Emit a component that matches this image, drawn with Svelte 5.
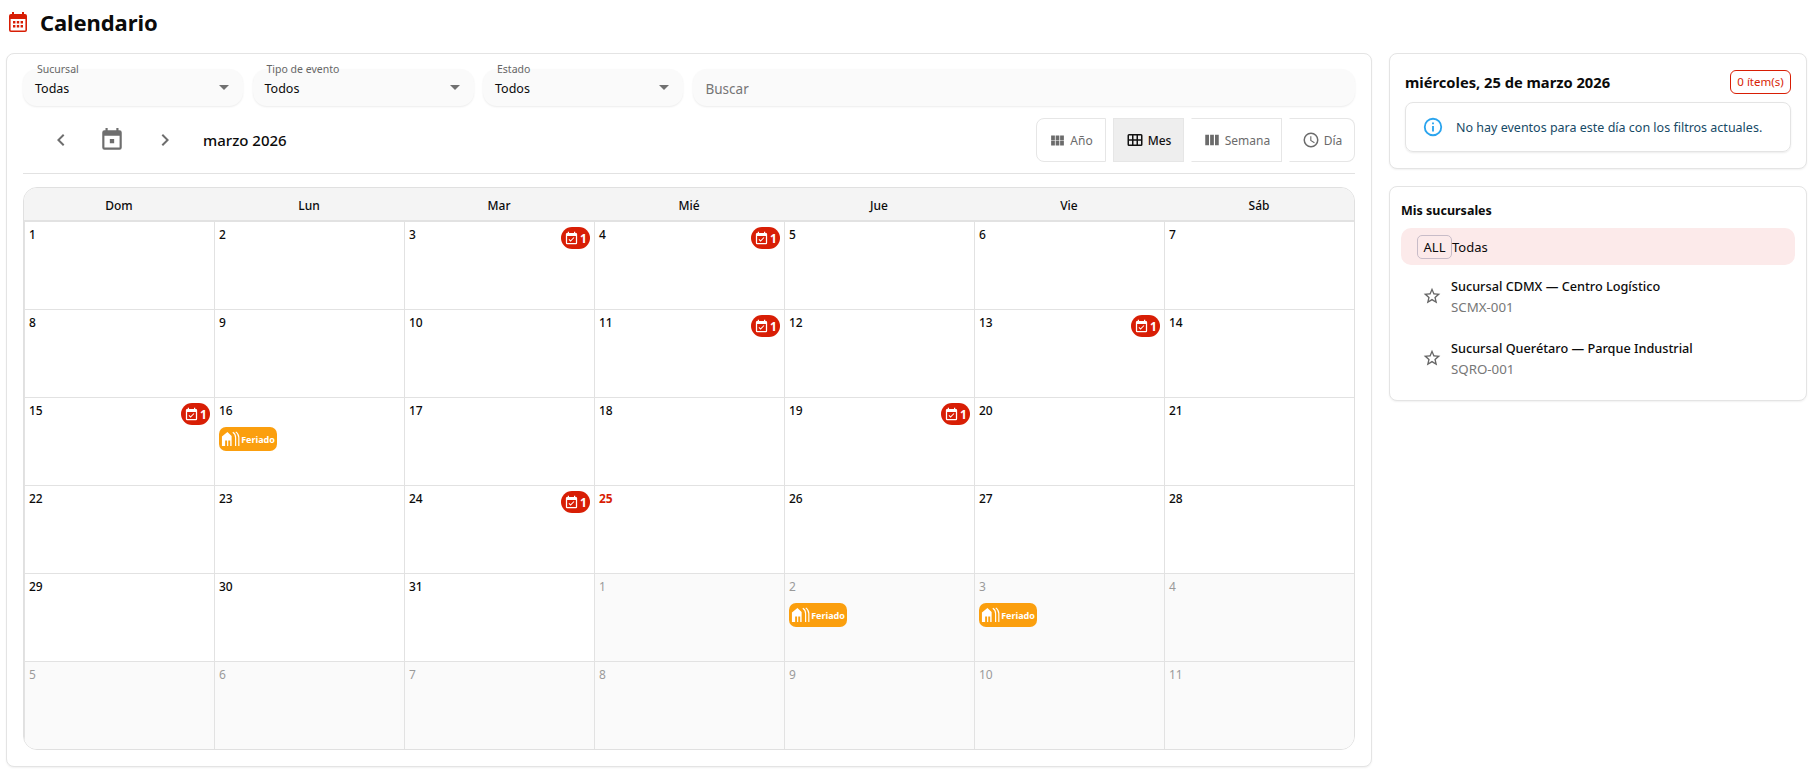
<script>
    const weekdays = ["Dom", "Lun", "Mar", "Mié", "Jue", "Vie", "Sáb"];

    const badges = [3, 4, 11, 13, 15, 19, 24];
    const holidays = [16];
    const nextHolidays = [2, 3];

    const days = [];
    for (let i = 1; i <= 31; i++) {
        days.push({
            n: i,
            badge: badges.includes(i),
            holiday: holidays.includes(i),
            today: i === 25,
        });
    }
    for (let i = 1; i <= 11; i++) {
        days.push({ n: i, out: true, holiday: nextHolidays.includes(i) });
    }

    const views = [
        { key: "year", label: "Año" },
        { key: "month", label: "Mes" },
        { key: "week", label: "Semana" },
        { key: "day", label: "Día" },
    ];

    const filters = [
        { label: "Sucursal", value: "Todas", width: 220 },
        { label: "Tipo de evento", value: "Todos", width: 221 },
        { label: "Estado", value: "Todos", width: 200 },
    ];

    const branches = [
        { name: "Sucursal CDMX — Centro Logístico", code: "SCMX-001" },
        { name: "Sucursal Querétaro — Parque Industrial", code: "SQRO-001" },
    ];
</script>

<div class="page">
    <header class="title">
        <svg class="title-icon" viewBox="0 0 18 20" width="18" height="20">
            <path fill="#d81e05" d="M3 0h2v2h8V0h2v2h1a2 2 0 0 1 2 2v14a2 2 0 0 1-2 2H2a2 2 0 0 1-2-2V4a2 2 0 0 1 2-2h1z"/>
            <path fill="#fff" d="M1.6 7h14.8v11a.6.6 0 0 1-.6.6H2.2a.6.6 0 0 1-.6-.6z"/>
            <path fill="#d81e05" d="M4 9h2.4v2.4H4zM7.8 9h2.4v2.4H7.8zM11.6 9H14v2.4h-2.4zM4 13h2.4v2.4H4zM7.8 13h2.4v2.4H7.8zM11.6 13H14v2.4h-2.4z"/>
        </svg>
        <h1>Calendario</h1>
    </header>

    <div class="columns">
        <main class="card main">
            <div class="filters">
                {#each filters as f}
                    <div class="field select" style="width: {f.width}px">
                        <span class="float-label">{f.label}</span>
                        <span class="value">{f.value}</span>
                        <span class="caret"></span>
                    </div>
                {/each}
                <div class="field search">Buscar</div>
            </div>

            <div class="toolbar">
                <div class="nav">
                    <svg class="chev" viewBox="0 0 24 24" width="24" height="24"><path d="M15.41 7.41 14 6l-6 6 6 6 1.41-1.41L10.83 12z"/></svg>
                    <svg class="today" viewBox="0 0 24 24" width="26" height="26"><path fill-rule="evenodd" d="M19 3h-1V1h-2v2H8V1H6v2H5a2 2 0 0 0-2 2v14a2 2 0 0 0 2 2h14a2 2 0 0 0 2-2V5a2 2 0 0 0-2-2zm0 16H5V8h14zM10 11h4v4h-4z"/></svg>
                    <svg class="chev" viewBox="0 0 24 24" width="24" height="24"><path d="M10 6 8.59 7.41 13.17 12l-4.58 4.59L10 18l6-6z"/></svg>
                    <span class="period">marzo 2026</span>
                </div>
                <div class="views">
                    {#each views as v}
                        <button class="view view-{v.key}" class:active={v.key === "month"}>
                            {#if v.key === "year"}
                                <svg viewBox="0 0 24 24" width="17" height="17"><path d="M3 5h5.3v6.5H3zM9.4 5h5.2v6.5H9.4zM15.7 5H21v6.5h-5.3zM3 12.5h5.3V19H3zM9.4 12.5h5.2V19H9.4zM15.7 12.5H21V19h-5.3z"/></svg>
                            {:else if v.key === "month"}
                                <svg viewBox="0 0 24 24" width="18" height="18"><path d="M20 4H4a2 2 0 0 0-2 2v12a2 2 0 0 0 2 2h16a2 2 0 0 0 2-2V6a2 2 0 0 0-2-2zM8 18H4v-5h4zm0-7H4V6h4zm6 7h-4v-5h4zm0-7h-4V6h4zm6 7h-4v-5h4zm0-7h-4V6h4z"/></svg>
                            {:else if v.key === "week"}
                                <svg viewBox="0 0 24 24" width="18" height="18"><path d="M3 5h5v14H3zM9.5 5h5v14h-5zM16 5h5v14h-5z"/></svg>
                            {:else}
                                <svg viewBox="0 0 24 24" width="18" height="18"><path d="M12 2a10 10 0 1 0 0 20 10 10 0 0 0 0-20zm0 18a8 8 0 1 1 0-16 8 8 0 0 1 0 16zm.5-13H11v6l5.2 3.2.8-1.3-4.5-2.7z"/></svg>
                            {/if}
                            {v.label}
                        </button>
                    {/each}
                </div>
            </div>

            <div class="divider"></div>

            <div class="calendar">
                <div class="head">
                    {#each weekdays as w}
                        <div class="head-cell">{w}</div>
                    {/each}
                </div>
                <div class="grid">
                    {#each days as d}
                        <div class="cell" class:out={d.out}>
                            <div class="cell-top">
                                <span class="num" class:now={d.today}>{d.n}</span>
                                {#if d.badge}
                                    <span class="badge">
                                        <svg viewBox="0 0 24 24" width="15" height="15"><path fill="#fff" d="M19 3h-1V1h-2v2H8V1H6v2H5a2 2 0 0 0-2 2v14a2 2 0 0 0 2 2h14a2 2 0 0 0 2-2V5a2 2 0 0 0-2-2zm0 16H5V8h14zm-8.5-2L7.3 13.8l1.1-1.1 2.1 2.1 5-5 1.1 1.1z"/></svg>
                                        1
                                    </span>
                                {/if}
                            </div>
                            {#if d.holiday}
                                <span class="holiday">
                                    <svg viewBox="0 0 22 18" width="20" height="16">
                                        <path fill="#fff" d="M7 1 .8 6.2V17h3.6v-6.4h2.2V17h1.3v-6.4h2.2V17h1.6V5.6z"/>
                                        <path fill="none" stroke="#fff" stroke-width="1.3" d="M13 1.5c2.4 1.4 3.2 3.4 3.2 6V17M16.4 1c2.4 1.6 3.4 3.6 3.4 6.4V17"/>
                                    </svg>
                                    Feriado
                                </span>
                            {/if}
                        </div>
                    {/each}
                </div>
            </div>
        </main>

        <aside class="side">
            <section class="card day-card">
                <div class="day-head">
                    <h2>miércoles, 25 de marzo 2026</h2>
                    <span class="count">0 ítem(s)</span>
                </div>
                <div class="notice">
                    <svg viewBox="0 0 24 24" width="22" height="22"><path fill="#2aa4ee" d="M11 7h2v2h-2zm0 4h2v6h-2zm1-9a10 10 0 1 0 0 20 10 10 0 0 0 0-20zm0 18a8 8 0 1 1 0-16 8 8 0 0 1 0 16z"/></svg>
                    <span>No hay eventos para este día con los filtros actuales.</span>
                </div>
            </section>

            <section class="card branches">
                <h3>Mis sucursales</h3>
                <div class="all-row">
                    <span class="all-chip">ALL</span>
                    <span>Todas</span>
                </div>
                {#each branches as b}
                    <div class="branch">
                        <svg viewBox="0 0 24 24" width="20" height="20"><path fill="#666" d="m22 9.24-7.19-.62L12 2 9.19 8.63 2 9.24l5.46 4.73L5.82 21 12 17.27 18.18 21l-1.63-7.03zM12 15.4l-3.76 2.27 1-4.28-3.32-2.88 4.38-.38L12 6.1l1.71 4.04 4.38.38-3.32 2.88 1 4.28z"/></svg>
                        <div class="branch-text">
                            <div class="branch-name">{b.name}</div>
                            <div class="branch-code">{b.code}</div>
                        </div>
                    </div>
                {/each}
            </section>
        </aside>
    </div>
</div>

<style>
    :global(body) {
        margin: 0;
        background: #fff;
        font-family: "Noto Sans", "Open Sans", sans-serif;
        color: #0b0b0b;
    }

    .page {
        width: 1813px;
        height: 774px;
        overflow: hidden;
        box-sizing: border-box;
        padding: 0 6px;
    }

    .title {
        display: flex;
        align-items: center;
        height: 53px;
        padding: 0 0 9px 3px;
        box-sizing: border-box;
        gap: 13px;
    }

    .title-icon {
        display: block;
    }

    h1 {
        margin: 0;
        font-size: 22px;
        font-weight: 700;
        line-height: 30px;
        letter-spacing: -0.1px;
    }

    .columns {
        display: flex;
        align-items: flex-start;
        gap: 17px;
    }

    .card {
        box-sizing: border-box;
        background: #fff;
        border: 1px solid #e4e4e4;
        border-radius: 8px;
        box-shadow: 0 1px 2px rgba(0, 0, 0, 0.06);
    }

    .main {
        width: 1366px;
        height: 714px;
        padding: 15px 16px 0;
    }

    .filters {
        display: flex;
        gap: 9.5px;
    }

    .field {
        position: relative;
        box-sizing: border-box;
        height: 37px;
        background: #fafafa;
        border-radius: 14px;
        box-shadow: 0 1px 2px rgba(0, 0, 0, 0.08);
        display: flex;
        align-items: center;
        padding: 0 12px;
        font-size: 12.5px;
    }

    .select {
        justify-content: space-between;
        padding-right: 14px;
        padding-left: 12px;
    }

    .value {
        padding-top: 1px;
    }

    .float-label {
        position: absolute;
        left: 14px;
        top: -7px;
        font-size: 10.5px;
        line-height: 14px;
        color: #666;
    }

    .caret {
        width: 0;
        height: 0;
        border-left: 5px solid transparent;
        border-right: 5px solid transparent;
        border-top: 5px solid #707070;
    }

    .search {
        flex: 1;
        color: #757575;
        font-size: 13.5px;
        padding: 2px 13px 0;
    }

    .toolbar {
        display: flex;
        justify-content: space-between;
        align-items: center;
        margin-top: 12px;
        height: 44px;
    }

    .nav {
        display: flex;
        align-items: center;
        padding-left: 26px;
    }

    .chev {
        fill: #6e6e6e;
    }

    .today {
        fill: #6e6e6e;
        margin: 0 28px 0 26px;
    }

    .period {
        margin-left: 26px;
        font-size: 15px;
        font-weight: 500;
    }

    .views {
        display: flex;
        gap: 7px;
    }

    .view {
        display: flex;
        align-items: center;
        justify-content: center;
        gap: 4px;
        height: 44px;
        box-sizing: border-box;
        padding: 0;
        background: #fff;
        border: 1px solid #e6e6e6;
        font-family: inherit;
        font-size: 12px;
        color: #6b6b6b;
    }

    .view svg {
        fill: #6b6b6b;
    }

    .view-year {
        width: 70px;
        border-radius: 8px 0 0 8px;
    }

    .view-month {
        width: 71px;
    }

    .view-week {
        width: 91px;
        border-left-color: transparent;
    }

    .view-day {
        width: 66px;
        border-left-color: transparent;
        border-radius: 0 8px 8px 0;
    }

    .view.active {
        background: #eeeeee;
        color: #111;
        font-weight: 500;
    }

    .view.active svg {
        fill: #111;
    }

    .divider {
        height: 1px;
        background: #e2e2e2;
        margin-top: 11px;
    }

    .calendar {
        margin-top: 13px;
        border: 1px solid #e0e0e0;
        border-radius: 14px;
        overflow: hidden;
        height: 563px;
        box-sizing: border-box;
    }

    .head {
        display: grid;
        grid-template-columns: repeat(7, 1fr);
        height: 30px;
        padding-top: 2px;
        background: #f4f4f4;
        border-bottom: 2px solid #e2e2e2;
    }

    .head-cell {
        display: flex;
        align-items: center;
        justify-content: center;
        font-size: 12px;
        font-weight: 500;
    }

    .grid {
        display: grid;
        grid-template-columns: repeat(7, 1fr);
        grid-auto-rows: 88px;
    }

    .cell {
        box-sizing: border-box;
        padding: 4px 4px 0;
        border-left: 1px solid #e2e2e2;
        border-bottom: 1px solid #e2e2e2;
        min-width: 0;
    }

    .cell:nth-child(n + 36) {
        border-bottom: 0;
    }

    .cell.out {
        background: #fafafa;
    }

    .cell-top {
        display: flex;
        justify-content: space-between;
        align-items: flex-start;
        height: 24px;
    }

    .num {
        font-size: 12px;
        font-weight: 500;
        line-height: 18px;
    }

    .num.now {
        color: #d81e05;
        font-weight: 700;
    }

    .out .num {
        color: #9a9a9a;
        font-weight: 400;
    }

    .badge {
        display: inline-flex;
        align-items: center;
        justify-content: center;
        gap: 1px;
        width: 29px;
        height: 22px;
        margin-top: 1px;
        background: #d81e05;
        border-radius: 11px;
        color: #fff;
        font-size: 12px;
        font-weight: 700;
    }

    .holiday {
        display: inline-flex;
        align-items: center;
        justify-content: center;
        width: 58px;
        height: 24px;
        margin-top: 1px;
        background: #fb9f0e;
        border-radius: 7px;
        color: #fff;
        font-size: 9px;
        font-weight: 700;
    }

    .side {
        width: 418px;
        display: flex;
        flex-direction: column;
        gap: 17px;
    }

    .day-card {
        height: 116px;
        padding: 16px 15px 0;
    }

    .day-head {
        display: flex;
        justify-content: space-between;
        align-items: center;
        height: 24px;
    }

    h2 {
        margin: 0;
        font-size: 14.7px;
        font-weight: 700;
    }

    .count {
        box-sizing: border-box;
        width: 61px;
        height: 24px;
        border: 1px solid #d81e05;
        border-radius: 6px;
        color: #d81e05;
        font-size: 11.5px;
        text-align: center;
        line-height: 22px;
    }

    .notice {
        box-sizing: border-box;
        display: flex;
        align-items: center;
        gap: 12px;
        height: 50px;
        margin-top: 8px;
        padding-left: 16px;
        border: 1px solid #e4e4e4;
        border-radius: 8px;
        box-shadow: 0 1px 2px rgba(0, 0, 0, 0.08);
        font-size: 12.5px;
        color: #174a66;
    }

    .branches {
        height: 215px;
        padding: 0 11px;
    }

    h3 {
        margin: 0;
        font-size: 12.5px;
        font-weight: 700;
        padding: 14px 0 0;
        line-height: 19px;
        height: 41px;
        box-sizing: border-box;
    }

    .all-row {
        display: flex;
        align-items: center;
        height: 37px;
        padding-left: 16px;
        background: #fceaea;
        border-radius: 10px;
        font-size: 13px;
    }

    .all-chip {
        box-sizing: border-box;
        width: 35px;
        height: 24px;
        border: 1px solid #c8bcc8;
        border-radius: 5px;
        text-align: center;
        line-height: 22px;
    }

    .branch {
        display: flex;
        align-items: center;
        height: 62px;
        gap: 9px;
        padding-left: 21px;
    }

    .branch-text {
        padding-top: 1px;
    }

    .branch-name {
        font-size: 12.7px;
        font-weight: 500;
        line-height: 21px;
    }

    .branch-code {
        font-size: 13.3px;
        line-height: 21px;
        color: #777;
    }
</style>
